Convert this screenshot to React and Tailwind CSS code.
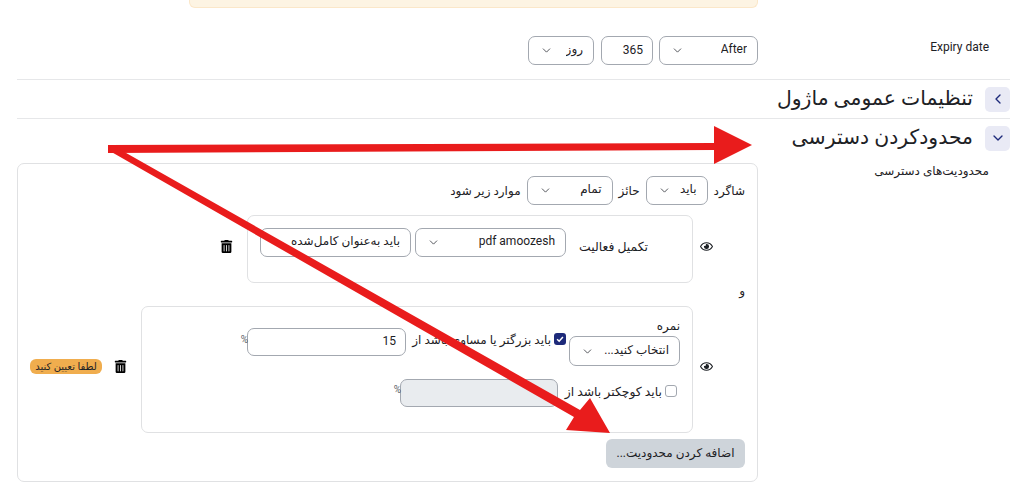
import { ChevronDown, ChevronLeft } from 'lucide-react';
import { FaRegEye, FaTrashAlt } from 'react-icons/fa';

function FakeSelect({ label, className = '' }) {
    return (
        <div className={`flex h-[29px] items-center justify-between rounded-[7px] border border-[#a3a8b0] bg-white pl-[11px] pr-[10px] ${className}`}>
            <span className="truncate pb-[3px]">{label}</span>
            <ChevronDown size={13} strokeWidth={1.6} className="shrink-0 text-[#3c4046]" />
        </div>
    );
}

function Field({ value, disabled, className = '' }) {
    return (
        <div className={`flex h-[28px] items-center rounded-[7px] border border-[#a3a8b0] px-[9px] pb-[2px] ${disabled ? 'bg-[#e9ecef]' : 'bg-white'} ${className}`}>
            {value}
        </div>
    );
}

function SectionHeader({ title, open }) {
    return (
        <div className="flex h-[39px] items-center border-t border-[#e6e7e9]">
            <div className="flex h-[25px] w-[25px] items-center justify-center rounded-[5px] bg-[#e9eaf5] text-[#1d2a7a]">
                {open ? <ChevronDown size={16} strokeWidth={2} /> : <ChevronLeft size={16} strokeWidth={2} />}
            </div>
            <h3 className="mr-[12px] pb-[2px] text-[20.4px] font-medium leading-none text-[#1d2125]">{title}</h3>
        </div>
    );
}

export default function App() {
    return (
        <div dir="rtl" className="relative h-[485px] w-[1024px] overflow-hidden bg-white pl-[17px] pr-[14px] text-[12px] text-[#1d2125] [font-family:Roboto,'DejaVu_Sans',sans-serif]">
            {/* alert cut off by the top edge */}
            <div className="mr-[252px] h-[8px] w-[569px] rounded-b-[6px] border border-t-0 border-[#fbe7c9] bg-[#fdf4e3]" />

            <div className="flex h-[71px] items-start">
                <div className="w-[252px] pt-[30px] pr-[21px]">Expiry date</div>
                <div className="flex pt-[28px]">
                    <FakeSelect label="After" className="w-[99px]" />
                    <Field value="365" className="mr-[6px] h-[29px] w-[52px] justify-start" />
                    <FakeSelect label="روز" className="mr-[7px] w-[66px]" />
                </div>
            </div>

            <SectionHeader title="تنظیمات عمومی ماژول" />
            <SectionHeader title="محدودکردن دسترسی" open />

            <div className="flex items-start">
                <div className="w-[252px] pr-[21px] pt-[5px]">محدودیت‌های دسترسی</div>
                <div className="mt-[6px] h-[319px] w-[741px] rounded-[7px] border border-[#e0e1e3] pr-[12px] pt-[12px]">
                    <div className="flex items-center gap-[6px]">
                        <span>شاگرد</span>
                        <FakeSelect label="باید" className="w-[62px]" />
                        <span>حائز</span>
                        <FakeSelect label="تمام" className="w-[86px]" />
                        <span>موارد زیر شود</span>
                    </div>

                    <div className="mt-[10px] flex items-center">
                        <FaRegEye size={13} className="mb-[6px] mr-[32px] ml-[7px] shrink-0 text-[#1d2125]" />
                        <div className="flex h-[68px] w-[446px] items-start rounded-[7px] border border-[#e0e1e3] pr-[44px] pt-[12px]">
                            <span className="w-[82px] pt-[10px] text-[12.4px]">تکمیل فعالیت</span>
                            <FakeSelect label="pdf amoozesh" className="w-[151px]" />
                            <FakeSelect label="باید به‌عنوان کامل‌شده" className="mr-[4px] w-[151px] [&>svg]:hidden" />
                        </div>
                        <FaTrashAlt size={13} className="mb-[6px] mr-[14px] shrink-0 text-black" />
                    </div>

                    <div className="mt-[-2px] text-[12px] leading-[20px]">و</div>

                    <div className="mt-[5px] flex items-center">
                        <FaRegEye size={13} className="mb-[6px] mr-[32px] ml-[7px] shrink-0 text-[#1d2125]" />
                        <div className="h-[127px] w-[552px] rounded-[7px] border border-[#e0e1e3] pr-[12px] pt-[11px]">
                            <div className="flex items-start">
                                <div className="w-[111px] shrink-0">
                                    <div className="h-[18px] leading-[16px]">نمره</div>
                                    <FakeSelect label="انتخاب کنید..." className="h-[30px] w-[111px]" />
                                </div>
                                <div className="mr-[3px] mt-[10px] flex items-start">
                                    <div className="mt-[5px] flex h-[12px] w-[12px] items-center justify-center rounded-[3px] bg-[#1d2a7a]">
                                        <svg viewBox="0 0 12 12" className="h-[10px] w-[10px]">
                                            <path d="M2.5 6.2 5 8.6 9.5 3.6" fill="none" stroke="white" strokeWidth="1.8" />
                                        </svg>
                                    </div>
                                    <span className="mr-[3px] w-[145px] whitespace-nowrap pt-[3px]">باید بزرگتر یا مساوی باشد از</span>
                                    <Field value="15" className="w-[159px]" />
                                    <span className="mr-[-1px] mt-[4px] text-[10px] text-[#5a6068]">%</span>
                                </div>
                            </div>
                            <div className="mr-[3px] mt-[13px] flex items-start">
                                <div className="mt-[6px] h-[12px] w-[12px] rounded-[3px] border border-[#a3a8b0] bg-white" />
                                <span className="mr-[3px] w-[104px] whitespace-nowrap pt-[4px] text-[12.4px]">باید کوچکتر باشد از</span>
                                <Field disabled className="w-[158px]" />
                                <span className="mr-[-1px] mt-[3px] text-[10px] text-[#5a6068]">%</span>
                            </div>
                        </div>
                        <FaTrashAlt size={13} className="mb-[6px] mr-[14px] shrink-0 text-black" />
                        <span className="mb-[6px] mr-[12px] flex h-[15px] w-[72px] items-center justify-center rounded-[6px] bg-[#f0ad4e] text-[10px] leading-none">لطفا تعیین کنید</span>
                    </div>

                    <button type="button" className="mt-[6px] h-[29px] w-[139px] rounded-[6px] bg-[#ced4da] pb-[2px] text-[12px] text-[#1d2125]">
                        اضافه کردن محدودیت...
                    </button>
                </div>
            </div>

            {/* annotation arrows drawn over the page */}
            <svg viewBox="0 0 1024 485" className="pointer-events-none absolute inset-0 h-[485px] w-[1024px]">
                <polygon fill="#e91c1c" points="108,145 714,143 714,126 752,145 714,164 714,150 108,153" />
                <polygon fill="#e91c1c" points="108,150 112,145 580,410 590,398 610,433 566,430 574,417" />
            </svg>
        </div>
    );
}
